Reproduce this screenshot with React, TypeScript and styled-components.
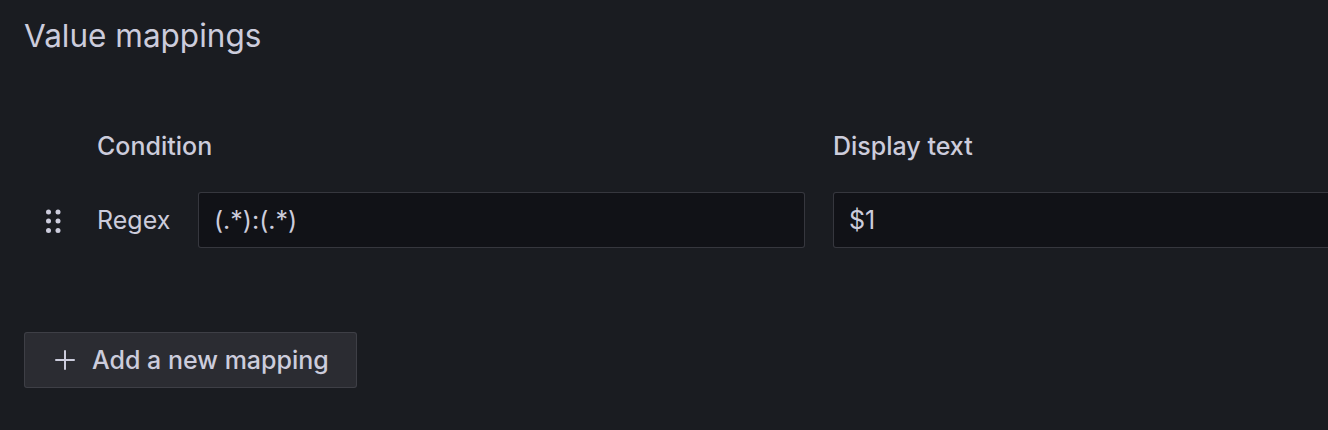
import React from "react";
import styled, { createGlobalStyle } from "styled-components";

const Global = createGlobalStyle`
  html, body { margin: 0; padding: 0; background: #181b1f; overflow: hidden; }
  body { font-family: Inter, "Noto Sans", sans-serif; color: #ccccdc; }
  * { box-sizing: border-box; }
`;

const Page = styled.div`
  width: 1328px;
  height: 430px;
  padding: 14px 0 0 24px;
  background: #1a1c21;
  overflow: hidden;
`;

const Title = styled.h2`
  margin: 0;
  font-size: 31.5px;
  font-weight: 400;
  line-height: 44px;
  color: #ccccdc;
`;

const Table = styled.div`
  display: grid;
  grid-template-columns: 45px 708px 600px;
  column-gap: 28px;
  width: 1500px;
  margin-top: 76px;
`;

const HeadCell = styled.div<{ $col: number }>`
  grid-column: ${(p) => p.$col};
  font-size: 25px;
  font-weight: 500;
  line-height: 24px;
  padding-bottom: 34px;
  color: #ccccdc;
`;

const Handle = styled.div`
  display: flex;
  align-items: center;
  justify-content: flex-start;
  padding-left: 22px;
  height: 56px;
  grid-column: 1;
`;

const ConditionCell = styled.div`
  display: flex;
  align-items: center;
  gap: 28px;
  grid-column: 2;
`;

const TypeLabel = styled.span`
  font-size: 25px;
  font-weight: 400;
  width: 73px;
  flex: none;
`;

const Input = styled.div`
  height: 56px;
  flex: 1;
  display: flex;
  align-items: center;
  padding: 0 15px;
  background: #111217;
  border: 1px solid rgba(204, 204, 220, 0.2);
  border-radius: 3px;
  font-size: 25px;
  color: #ccccdc;
`;

const DisplayCell = styled.div`
  grid-column: 3;
  display: flex;
`;

const AddButton = styled.button`
  margin-top: 84px;
  height: 56px;
  width: 333px;
  display: flex;
  align-items: center;
  gap: 16px;
  padding: 0 0 0 29px;
  background: #2b2c32;
  border: 1px solid rgba(204, 204, 220, 0.12);
  border-radius: 3px;
  color: #ccccdc;
  font-family: Inter, "Noto Sans", sans-serif;
  font-size: 25px;
  font-weight: 500;
`;

const DragDots = () => (
  <svg width="16" height="28" viewBox="0 0 16 28" fill="#ccccdc">
    <circle cx="2.5" cy="6" r="2.5" />
    <circle cx="12" cy="6" r="2.5" />
    <circle cx="2.5" cy="15" r="2.5" />
    <circle cx="12" cy="15" r="2.5" />
    <circle cx="2.5" cy="24.5" r="2.5" />
    <circle cx="12" cy="24.5" r="2.5" />
  </svg>
);

const Plus = () => (
  <svg width="22" height="22" viewBox="0 0 22 22" stroke="#ccccdc" strokeWidth="2" strokeLinecap="round">
    <line x1="11" y1="2" x2="11" y2="20" />
    <line x1="2" y1="11" x2="20" y2="11" />
  </svg>
);

export default function App() {
  return (
    <Page>
      <Global />
      <Title>Value mappings</Title>
      <Table>
        <HeadCell $col={2}>Condition</HeadCell>
        <HeadCell $col={3}>Display text</HeadCell>
        <Handle>
          <DragDots />
        </Handle>
        <ConditionCell>
          <TypeLabel>Regex</TypeLabel>
          <Input>(.*):(.*)</Input>
        </ConditionCell>
        <DisplayCell>
          <Input>$1</Input>
        </DisplayCell>
      </Table>
      <AddButton>
        <Plus />
        Add a new mapping
      </AddButton>
    </Page>
  );
}
